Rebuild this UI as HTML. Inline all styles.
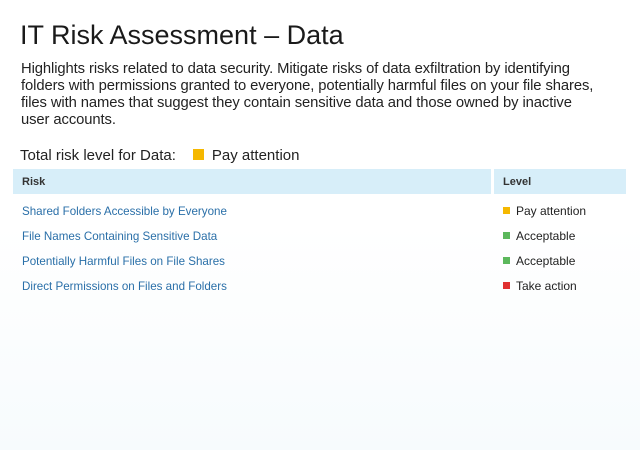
<!DOCTYPE html>
<html><head><meta charset="utf-8"><style>
body{margin:0;width:640px;height:450px;background:linear-gradient(#fff 0%,#fff 50%,#f7fbfd 100%);font-family:"Liberation Sans",sans-serif;color:#222;position:relative;overflow:hidden}
.t{position:absolute;left:20px;top:20px;font-size:27px;color:#1a1a1a}
.d{position:absolute;left:21px;top:61px;width:620px;font-size:14.8px;line-height:17px;color:#222;white-space:nowrap;letter-spacing:-0.1px}
.tot{position:absolute;left:20px;top:147px;font-size:15px;color:#222}
.sq{display:inline-block;width:11px;height:11px;vertical-align:0px}
.h1{position:absolute;left:13px;top:169px;width:478px;height:25px;background:#d7eef9}
.h2{position:absolute;left:494px;top:169px;width:132px;height:25px;background:#d7eef9}
.ht{position:absolute;top:176px;font-size:11px;color:#333;font-weight:bold}
.r{position:absolute;left:22px;font-size:11.6px;color:#2a6fa8}
.l{position:absolute;left:503px;font-size:12px;color:#222}
.l .sq{width:7px;height:7px;margin-right:6px;vertical-align:1px}
</style></head><body>
<div class="t">IT Risk Assessment – Data</div>
<div class="d">Highlights risks related to data security. Mitigate risks of data exfiltration by identifying<br>folders with permissions granted to everyone, potentially harmful files on your file shares,<br>files with names that suggest they contain sensitive data and those owned by inactive<br>user accounts.</div>
<div class="tot">Total risk level for Data:&nbsp;&nbsp;&nbsp;&nbsp;<span class="sq" style="background:#f5b800"></span>&nbsp;&nbsp;Pay attention</div>
<div class="h1"></div><div class="h2"></div>
<div class="ht" style="left:22px">Risk</div><div class="ht" style="left:503px">Level</div>
<div class="r" style="top:205px">Shared Folders Accessible by Everyone</div>
<div class="r" style="top:230px">File Names Containing Sensitive Data</div>
<div class="r" style="top:255px">Potentially Harmful Files on File Shares</div>
<div class="r" style="top:280px">Direct Permissions on Files and Folders</div>
<div class="l" style="top:204px"><span class="sq" style="background:#f5b800"></span>Pay attention</div>
<div class="l" style="top:229px"><span class="sq" style="background:#5cb85c"></span>Acceptable</div>
<div class="l" style="top:254px"><span class="sq" style="background:#5cb85c"></span>Acceptable</div>
<div class="l" style="top:279px"><span class="sq" style="background:#e03030"></span>Take action</div>
</body></html>
